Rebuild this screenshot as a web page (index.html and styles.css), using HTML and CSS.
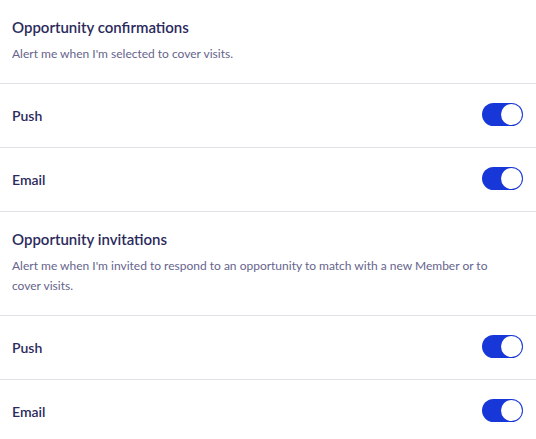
FILE: index.html
```html
<!DOCTYPE html>
<html lang="en">
<head>
<meta charset="utf-8">
<link rel="stylesheet" href="styles.css">
</head>
<body>
<div class="settings">
  <section class="group">
    <div class="group-head">
      <h2 class="group-title">Opportunity confirmations</h2>
      <p class="group-desc">Alert me when I'm selected to cover visits.</p>
    </div>
    <div class="row">
      <span class="row-label">Push</span>
      <span class="toggle on"><span class="knob"></span></span>
    </div>
    <div class="row">
      <span class="row-label">Email</span>
      <span class="toggle on"><span class="knob"></span></span>
    </div>
  </section>
  <section class="group">
    <div class="group-head">
      <h2 class="group-title">Opportunity invitations</h2>
      <p class="group-desc">Alert me when I'm invited to respond to an opportunity to match with a new Member or to cover visits.</p>
    </div>
    <div class="row">
      <span class="row-label">Push</span>
      <span class="toggle on"><span class="knob"></span></span>
    </div>
    <div class="row">
      <span class="row-label">Email</span>
      <span class="toggle on"><span class="knob"></span></span>
    </div>
  </section>
</div>
</body>
</html>
```
FILE: styles.css
```css
* { box-sizing: border-box; }
html, body { margin: 0; padding: 0; background: #ffffff; }
body {
  font-family: Lato, Roboto, sans-serif;
  color: #2b2a5c;
  -webkit-font-smoothing: antialiased;
}
.settings { display: flex; flex-direction: column; }
.group-head {
  padding: 17px 36px 19px 12px;
  border-bottom: 1px solid #e1e1e6;
}
.group-title {
  margin: 0;
  font-size: 15px;
  line-height: 20px;
  font-weight: 600;
  color: #2b2a5c;
}
.group-desc {
  margin: 7px 0 0 0;
  font-size: 12px;
  line-height: 20px;
  color: #66648c;
  font-weight: 400;
}
.row {
  height: 64px;
  display: flex;
  align-items: center;
  justify-content: space-between;
  padding: 0 13px 0 12px;
  border-bottom: 1px solid #e1e1e6;
}
.row-label {
  font-size: 14px;
  font-weight: 600;
  color: #2b2a5c;
}
.toggle {
  width: 41px;
  height: 23px;
  margin-bottom: 3px;
  border-radius: 12px;
  background: #1737d8;
  display: flex;
  align-items: center;
  justify-content: flex-end;
  padding: 0 1px;
}
.knob {
  width: 21px;
  height: 21px;
  border-radius: 50%;
  background: #ffffff;
}
```
